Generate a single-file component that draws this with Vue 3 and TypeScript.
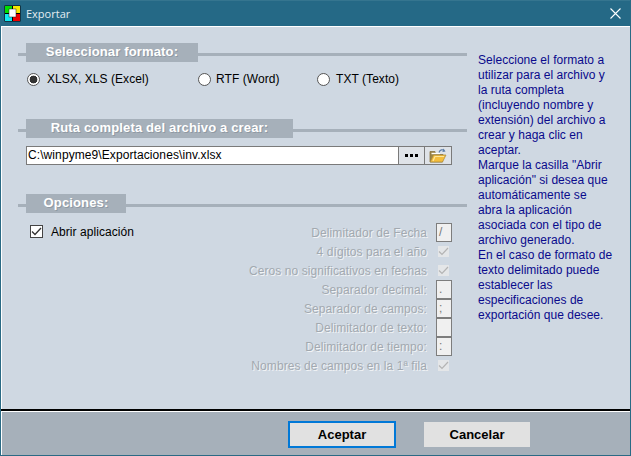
<script setup lang="ts">
const rows = [
  { label: 'Delimitador de Fecha', kind: 'box', value: '/' },
  { label: '4 dígitos para el año', kind: 'check', value: '' },
  { label: 'Ceros no significativos en fechas', kind: 'check', value: '' },
  { label: 'Separador decimal:', kind: 'box', value: '.' },
  { label: 'Separador de campos:', kind: 'box', value: ';' },
  { label: 'Delimitador de texto:', kind: 'box', value: '' },
  { label: 'Delimitador de tiempo:', kind: 'box', value: ':' },
  { label: 'Nombres de campos en la 1ª fila', kind: 'check', value: '' },
]
const help = [
  'Seleccione el formato a', 'utilizar para el archivo y', 'la ruta completa', '(incluyendo nombre y',
  'extensión) del archivo a', 'crear y haga clic en', 'aceptar.', 'Marque la casilla "Abrir',
  'aplicación" si desea que', 'automáticamente se', 'abra la aplicación', 'asociada con el tipo de',
  'archivo generado.', 'En el caso de formato de', 'texto delimitado puede', 'establecer las',
  'especificaciones de', 'exportación que desee.',
]
</script>

<template>
  <div class="window">
    <header class="titlebar">
      <svg class="appicon" width="17" height="17" viewBox="0 0 17 17">
        <rect x="0.5" y="0.5" width="16" height="16" fill="#000" />
        <rect x="1" y="1" width="7" height="7" fill="#00e000" />
        <rect x="9" y="1" width="7" height="7" fill="#f8e800" />
        <rect x="1" y="9" width="7" height="7" fill="#10e8f0" />
        <rect x="9" y="9" width="7" height="7" fill="#f00000" />
        <rect x="5" y="4" width="7" height="8" fill="#fff" stroke="#222" stroke-width="0.5" />
      </svg>
      <span class="title">Exportar</span>
      <svg class="close" width="11" height="11" viewBox="0 0 11 11">
        <path d="M0.5 0.5L10.5 10.5M10.5 0.5L0.5 10.5" stroke="#fff" stroke-width="1.1" fill="none" />
      </svg>
    </header>

    <main class="body">
      <div class="left">
        <section class="sec-format">
          <div class="head"><h2 class="w172">Seleccionar formato:</h2></div>
          <div class="radios">
            <label class="radio r1"><i class="dot on"></i>XLSX, XLS (Excel)</label>
            <label class="radio r2"><i class="dot"></i>RTF (Word)</label>
            <label class="radio r3"><i class="dot"></i>TXT (Texto)</label>
          </div>
        </section>

        <section class="sec-path">
          <div class="head"><h2 class="w270">Ruta completa del archivo a crear:</h2></div>
          <div class="pathrow">
            <div class="path">C:\winpyme9\Exportaciones\inv.xlsx</div>
            <div class="tool dots"><b></b><b></b><b></b></div>
            <div class="tool">
              <svg width="18" height="15" viewBox="0 0 18 15">
                <path d="M1 3.5V14H13.5L14 6.5H6.5L6 3.5H1Z" fill="#9c8548" stroke="#8a7440" stroke-width="0.8" />
                <path d="M2.5 5.5H11" stroke="#fff" stroke-width="1.4" />
                <path d="M1.2 14L4.5 7H17L13.5 14H1.2Z" fill="#f4bd3c" stroke="#a88a3e" stroke-width="0.7" />
                <path d="M4 13L6 8.5H15" stroke="#fde79a" stroke-width="1.2" fill="none" />
                <path d="M10 4.5C11 1.8 13.5 1 15.5 2.5" stroke="#5c7ea8" stroke-width="1.2" fill="none" />
                <path d="M14.2 0.6L16.6 3.6L13.4 4Z" fill="#5c7ea8" />
              </svg>
            </div>
          </div>
        </section>

        <section class="sec-opts">
          <div class="head"><h2 class="w100">Opciones:</h2></div>
          <div class="optsbody">
            <label class="open"><i class="chk"><svg width="11" height="9" viewBox="0 0 11 9"><path d="M1 4.5L4 7.5L10 1" stroke="#333" stroke-width="1.3" fill="none" /></svg></i>Abrir aplicación</label>
            <div class="grid">
              <div v-for="r in rows" :key="r.label" class="row">
                <span class="lab">{{ r.label }}</span>
                <span v-if="r.kind === 'box'" class="box">{{ r.value }}</span>
                <span v-else class="dchk"><svg width="11" height="9" viewBox="0 0 11 9"><path d="M1 4.5L4 7.5L10 1" stroke="#b4b4b4" stroke-width="1.2" fill="none" /></svg></span>
              </div>
            </div>
          </div>
        </section>
      </div>

      <aside class="help">
        <div v-for="(l, i) in help" :key="i">{{ l }}</div>
      </aside>
    </main>

    <footer class="footer">
      <button class="btn primary">Aceptar</button>
      <button class="btn">Cancelar</button>
    </footer>
  </div>
</template>

<style scoped>
.window {
  width: 631px;
  height: 456px;
  box-sizing: border-box;
  display: flex;
  flex-direction: column;
  background: #cfd8e2;
  border: 1px solid #2a6a85;
  border-top: 0;
  font-family: "Liberation Sans", Arial, sans-serif;
  overflow: hidden;
}
.titlebar {
  height: 26px;
  margin: 0 -1px;
  flex: none;
  display: flex;
  align-items: center;
  background: #256986;
  border-top: 1px solid #35758f;
  box-sizing: border-box;
  padding: 0 10px 0 4px;
  color: #e4edf2;
}
.appicon { flex: none; }
.title {
  margin-left: 5px;
  font: 11px "Open Sans", sans-serif;
  flex: 1;
}
.body {
  flex: 1;
  display: flex;
  border-top: 1px solid #fff;
  border-left: 1px solid #fff;
  min-height: 0;
}
.left {
  width: 449px;
  margin-left: 16px;
  flex: none;
}
.head {
  height: 19px;
  background: linear-gradient(#a6b0ba, #a6b0ba) 0 10px / 100% 3px no-repeat;
}
h2 {
  margin: 0 0 0 8px;
  height: 19px;
  line-height: 18px;
  background: #a6b0ba;
  color: #fff;
  font-size: 13px;
  font-weight: 700;
  letter-spacing: 0.15px;
  text-align: center;
  text-shadow: 1px 1px 0 #8f99a3;
  box-sizing: border-box;
}
.w172 { width: 172px; }
.w270 { width: 267px; }
.w100 { width: 100px; }
.sec-format { margin-top: 16px; }
.radios {
  display: flex;
  margin-top: 9px;
  height: 16px;
}
.radio {
  display: flex;
  align-items: center;
  font-size: 12px;
  letter-spacing: 0.06px;
  color: #000;
  white-space: nowrap;
}
.r1 { margin-left: 9px; width: 171px; }
.r2 { width: 119px; }
.dot {
  width: 13px;
  height: 13px;
  box-sizing: border-box;
  border: 1px solid #555;
  border-radius: 50%;
  background: #fff;
  margin-right: 5px;
  flex: none;
}
.dot.on { background: radial-gradient(circle, #333 0 3.6px, #fff 4.2px); margin-right: 7px; }
.r3 .dot { margin-right: 6px; }
.sec-path { margin-top: 32px; }
.pathrow {
  display: flex;
  margin: 8px 0 0 8px;
  height: 19px;
}
.path {
  width: 373px;
  box-sizing: border-box;
  border: 1px solid #7a7a7a;
  background: #fff;
  font-size: 12px;
  letter-spacing: 0.09px;
  line-height: 17px;
  padding-left: 1px;
  color: #000;
}
.tool {
  box-sizing: border-box;
  width: 27px;
  height: 19px;
  border: 1px solid #7a7a7a;
  border-left: 0;
  background: #dfe3e8;
  display: flex;
  align-items: center;
  justify-content: center;
  gap: 2px;
}
.tool.dots { width: 26px; }
.dots b { width: 3px; height: 3px; background: #000; }
.sec-opts { margin-top: 29px; }
.optsbody {
  display: flex;
  margin-top: 10px;
  height: 160px;
}
.open {
  display: flex;
  align-items: flex-start;
  padding-left: 12px;
  width: 212px;
  flex: none;
  box-sizing: border-box;
  font-size: 12px;
  letter-spacing: 0.06px;
  color: #000;
  line-height: 14px;
  margin-top: 2px;
}
.chk {
  width: 13px;
  height: 13px;
  box-sizing: border-box;
  border: 1px solid #444;
  background: #fff;
  margin-right: 8px;
  display: flex;
  align-items: center;
  justify-content: center;
  flex: none;
}
.grid {
  flex: none;
  width: 222px;
}
.row {
  height: 19px;
  display: flex;
  align-items: center;
  justify-content: flex-end;
}
.lab {
  font-size: 12px;
  letter-spacing: 0.08px;
  color: #a2a9b0;
  text-shadow: 1px 1px 0 #f2f4f6;
  margin-right: 9px;
  white-space: nowrap;
}
.box {
  width: 16px;
  height: 19px;
  box-sizing: border-box;
  border: 1px solid #7d7d7d;
  background: #f0f0f0;
  font-size: 12px;
  line-height: 17px;
  padding-left: 2px;
  color: #777;
  flex: none;
}
.dchk {
  width: 11px;
  height: 11px;
  margin: 0 3px 0 2px;
  background: #e4e6e8;
  display: flex;
  align-items: center;
  justify-content: center;
  flex: none;
}
.help {
  margin: 26px 0 0 11px;
  width: 140px;
  font-size: 12px;
  letter-spacing: 0.03px;
  line-height: 15px;
  color: #0a0a8c;
  white-space: nowrap;
}
.footer {
  height: 44px;
  flex: none;
  box-sizing: border-box;
  background: #a6b0ba;
  border-top: 1px solid #fff;
  border-left: 1px solid #fff;
  box-shadow: 0 -2px 0 #000;
  display: flex;
  align-items: center;
  padding-left: 286px;
}
.btn {
  width: 106px;
  height: 25px;
  border: 0;
  background: #e1e1e1;
  font: 700 13px "Liberation Sans", Arial, sans-serif;
  color: #000;
  padding: 0;
  margin-top: 1px;
}
.primary {
  width: 108px;
  height: 27px;
  border: 2px solid #0078d7;
  margin-right: 28px;
}
</style>

<style>
html, body { margin: 0; padding: 0; }
</style>
